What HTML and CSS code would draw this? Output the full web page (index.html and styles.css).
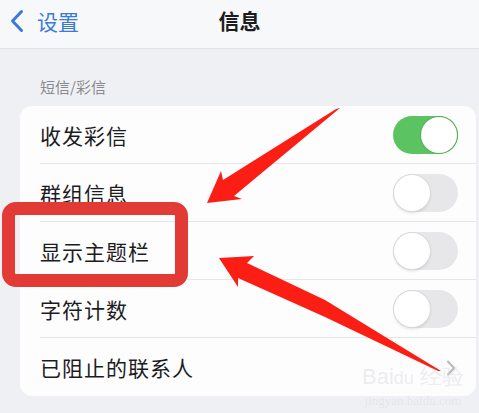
FILE: index.html
```html
<!DOCTYPE html>
<html lang="zh">
<head>
<meta charset="utf-8">
<link rel="stylesheet" href="styles.css">
</head>
<body>
<div class="page">
  <header class="nav">
    <div class="back">
      <svg class="back-icon" width="14" height="24" viewBox="0 0 14 24"><path d="M11.5 2.5 L2.5 12 L11.5 21.5" fill="none" stroke="#3a7ad9" stroke-width="3" stroke-linecap="round" stroke-linejoin="round"/></svg>
      <span>设置</span>
    </div>
    <div class="title">信息</div>
  </header>
  <div class="section-label">短信/彩信</div>
  <div class="card">
    <div class="row"><span class="label">收发彩信</span><span class="toggle on"><span class="knob"></span></span></div>
    <div class="row"><span class="label">群组信息</span><span class="toggle"><span class="knob"></span></span></div>
    <div class="row"><span class="label">显示主题栏</span><span class="toggle"><span class="knob"></span></span></div>
    <div class="row"><span class="label">字符计数</span><span class="toggle"><span class="knob"></span></span></div>
    <div class="row last"><span class="label">已阻止的联系人</span>
      <svg class="chev" width="10" height="16" viewBox="0 0 10 16"><path d="M2 1.5 L8 8 L2 14.5" fill="none" stroke="#b9b9bd" stroke-width="2" stroke-linecap="round" stroke-linejoin="round"/></svg>
    </div>
  </div>
  <div class="watermark">
    <div class="wm-main">Bai<span class="wm-paw">du</span> 经验</div>
    <div class="wm-sub">jingyan.baidu.com</div>
  </div>
  <div class="highlight"></div>
  <svg class="arrows" width="479" height="413" viewBox="0 0 479 413">
    <polygon fill="#fa1e14" points="340,108 336,109 223,180 221,171 207,203 242,199 234,196"/>
    <polygon fill="#fa1e14" points="219,258 254,256 247,263 325,300 441,371 438,371 325,317 238,278 238,287"/>
  </svg>
</div>
</body>
</html>
```
FILE: styles.css
```css
* { box-sizing: border-box; }
html, body { margin: 0; padding: 0; }
body {
  width: 479px;
  height: 413px;
  overflow: hidden;
  background: #eff0f4;
  font-family: "Noto Sans CJK SC", "Noto Sans", sans-serif;
  color: #1c1c1e;
}
.page { position: relative; width: 479px; height: 413px; }
.nav {
  height: 49px;
  background: #f7f8fa;
  border-bottom: 1px solid #e1e2e6;
  display: flex;
  align-items: center;
  position: relative;
}
.back {
  display: flex;
  align-items: center;
  gap: 13px;
  padding-left: 10px;
  color: #3a7ad9;
  font-size: 21px;
  margin-top: -6px;
}
.title {
  position: absolute;
  left: 0; right: 0;
  top: 0;
  height: 42px;
  line-height: 40px;
  text-align: center;
  font-size: 21px;
  font-weight: 700;
  pointer-events: none;
}
.section-label {
  padding: 26px 0 0 40px;
  font-size: 15px;
  color: #8a8a8e;
  height: 57px;
  line-height: 24px;
}
.card {
  margin-left: 20px;
  width: 456px;
  background: #fdfdfe;
  border-radius: 12px;
  overflow: hidden;
}
.row {
  height: 58px;
  display: flex;
  align-items: center;
  justify-content: space-between;
  margin-left: 20px;
  padding-right: 18px;
  border-bottom: 1px solid #e6e6e9;
}
.row.last { border-bottom: none; padding-right: 20px; }
.label { font-size: 21px; letter-spacing: 1px; }
.toggle {
  width: 65px;
  height: 38px;
  border-radius: 19px;
  background: #e7e7ea;
  position: relative;
  display: block;
}
.toggle .knob {
  position: absolute;
  left: 1px; top: 1px;
  width: 36px; height: 36px;
  border-radius: 50%;
  background: #fff;
  box-shadow: 0 0 0 1px #d8d8dc, 0 2px 3px rgba(0,0,0,0.12);
}
.toggle.on { background: #5bc35f; }
.toggle.on .knob { left: 28px; box-shadow: 0 0 0 1px #4fb153; }
.chev { margin-top: 2px; }
.watermark {
  position: absolute;
  left: 362px;
  top: 366px;
  color: rgba(215,215,220,0.45);
  text-align: center;
  font-family: "Liberation Sans", sans-serif;
}
.wm-main { font-size: 22px; font-weight: 400; line-height: 22px; }
.wm-paw { font-size: 18px; }
.wm-sub { font-size: 13px; line-height: 16px; margin-top: 4px; font-family: "Liberation Serif", serif; }
.highlight {
  position: absolute;
  left: 2px;
  top: 202px;
  width: 186px;
  height: 85px;
  border: 13px solid #e23a34;
  border-radius: 14px;
}
.arrows { position: absolute; left: 0; top: 0; }
```
